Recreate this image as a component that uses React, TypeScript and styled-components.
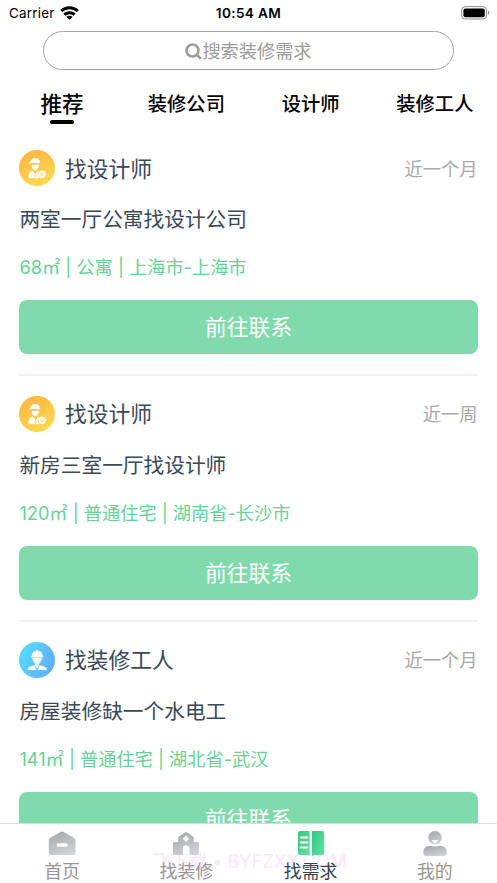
import React from "react";
import styled, { createGlobalStyle } from "styled-components";

const Global = createGlobalStyle`
  * { box-sizing: border-box; }
  html, body { margin: 0; padding: 0; background: #fff; overflow: hidden; }
  body { font-family: Inter, "Noto Sans CJK SC", sans-serif; }
`;

const Screen = styled.div`
  width: 497px;
  height: 883px;
  display: flex;
  flex-direction: column;
  overflow: hidden;
  background: #fff;
`;

const StatusBar = styled.header`
  height: 31px;
  flex: none;
  display: grid;
  grid-template-columns: 1fr auto 1fr;
  padding: 0 7px 6px 9px;
  align-items: center;
  color: #000;
  font-size: 13.5px;
`;

const Carrier = styled.div`
  display: flex;
  align-items: center;
  gap: 5px;
  letter-spacing: 0.2px;
`;

const Clock = styled.div`
  font-weight: 600;
  font-size: 13.6px;
  letter-spacing: 0.35px;
  margin-right: 2px;
`;

const BatterySlot = styled.div`
  display: flex;
  justify-content: flex-end;
`;

const SearchField = styled.div`
  flex: none;
  height: 39px;
  margin: 0 43px;
  border: 1px solid #a2a2a2;
  border-radius: 20px;
  display: flex;
  align-items: center;
  justify-content: center;
  color: #9b9b9b;
  font-size: 18.2px;
  line-height: 36px;
`;

const SearchGlyph = styled.svg`
  margin: 1px 0 0 0;
`;

const Tabs = styled.nav`
  flex: none;
  height: 60px;
  display: grid;
  grid-template-columns: repeat(4, 1fr);
`;

const Tab = styled.div<{ $active?: boolean }>`
  display: flex;
  flex-direction: column;
  align-items: center;
  color: #000;
  font-weight: 500;
  font-size: ${(p) => (p.$active ? "21.6px" : "19.3px")};
  line-height: 30px;
  padding-top: 19px;
`;

const TabMarker = styled.i`
  width: 24px;
  height: 4px;
  border-radius: 2px;
  background: #000;
  margin-top: 1px;
`;

const Feed = styled.main`
  flex: 1;
  min-height: 0;
  overflow: hidden;
  padding: 0 19.4px;
`;

const Card = styled.article`
  height: 245.8px;
  padding-top: 20px;
  display: flex;
  flex-direction: column;
`;

const CardHead = styled.div`
  display: flex;
  align-items: center;
  height: 36px;
`;

const CardKind = styled.span`
  flex: 1;
  margin-left: 9.5px;
  color: #3b4856;
  font-size: 21.8px;
  line-height: 36px;
  padding-top: 1px;
`;

const CardTime = styled.time`
  color: #a8a8a8;
  font-size: 18.3px;
  line-height: 36px;
  padding-top: 1px;
`;

const CardTitle = styled.h2`
  margin: 19.4px 0 0;
  color: #3b4856;
  font-size: 20.7px;
  font-weight: 400;
  line-height: 30px;
`;

const CardMeta = styled.p`
  margin: 18px 0 0;
  color: #68d296;
  font-size: 18.2px;
  line-height: 28px;
  white-space: pre;
`;

const ContactButton = styled.button`
  flex: none;
  margin: 18.6px 0 0;
  height: 54px;
  padding: 0;
  border: 0;
  border-radius: 8px;
  background: #80daab;
  color: #fff;
  font: inherit;
  font-size: 21.8px;
  line-height: 55px;
`;

const Divider = styled.div`
  height: 1.5px;
  flex: none;
  margin-top: 20.5px;
  background: #f1f1f3;
`;

const BottomNav = styled.nav`
  position: relative;
  flex: none;
  height: 60px;
  border-top: 1px solid #d9dcdb;
  background: #fff;
  display: grid;
  grid-template-columns: repeat(4, 1fr);
`;

const NavItem = styled.div<{ $active?: boolean }>`
  display: flex;
  flex-direction: column;
  align-items: center;
  padding-top: 5px;
  color: ${(p) => (p.$active ? "#37414c" : "#969696")};
  font-size: 17.9px;
  line-height: 24px;
`;

const NavIcon = styled.svg`
  display: block;
  position: relative;
  z-index: 1;
  margin-bottom: 3px;
`;

const Watermark = styled.span`
  position: absolute;
  left: 152px;
  top: 22px;
  color: #fbe6fa;
  font-size: 18.3px;
  line-height: 30px;
  white-space: nowrap;
  z-index: 0;
`;

const NavLabel = styled.span`
  position: relative;
  z-index: 1;
`;

function Wifi() {
  return (
    <svg width="19" height="14" viewBox="0 0 19 14" fill="none" stroke="#000" strokeWidth="2.9">
      <path d="M1.200 5C6 .7 13 .7 17.800 5" />
      <path d="M4.300 8.700C7.200 6.100 11.800 6.100 14.700 8.700" />
      <path d="M9.500 13.800 6.400 10.800C8.200 9.400 10.800 9.400 12.600 10.800Z" fill="#000" stroke="none" />
    </svg>
  );
}

function Battery() {
  return (
    <svg width="29" height="14" viewBox="0 0 29 14">
      <rect x=".6" y=".6" width="25" height="12.4" rx="3.6" fill="none" stroke="#8d8d8d" strokeWidth="1" />
      <rect x="2.4" y="2.4" width="21.4" height="8.8" rx="2" fill="#000" />
      <path d="M27.2 4.7c1.5.7 1.5 3.5 0 4.2z" fill="#777" />
    </svg>
  );
}

function DesignerAvatar() {
  return (
    <svg width="36" height="36" viewBox="0 0 36 36">
      <defs>
        <linearGradient id="amber" x1=".2" y1="0" x2=".7" y2="1">
          <stop stopColor="#fdb344" />
          <stop offset="1" stopColor="#ffdb50" />
        </linearGradient>
      </defs>
      <circle cx="18" cy="18" r="18" fill="url(#amber)" />
      <path d="M10.2 13.8c0-1.8 1.6-2.5 2.2-3.8.7-1.4 2.2-2 3.8-2 2.7 0 4.5 1.6 4.6 4.2l-.5 1.2c-3-1-6.8-.9-10.1.4z" fill="#fff" />
      <path d="M12.6 15c2.500-.6 4.700-.7 7.200-.1.2 2.700-1.400 5.200-3.500 5.200s-3.700-2.400-3.700-5.100z" fill="#fff" />
      <path d="M13.4 20.300 16.500 24l2.800-3.600c1 .5 1.800.8 2.400 1.300-2.600 1.700-2.600 4.400-.9 6.500H10.600c-1.200 0-1.300-.8-1.100-2.100.5-3.300 1.600-4.200 3.900-5.800z" fill="#fff" />
      <circle cx="23.100" cy="24.300" r="4.100" fill="#fff" stroke="#fec953" strokeWidth=".8" />
      <path d="M21 22.700c0 1.800.9 2.700 2.100 2.700s2.100-.9 2.100-2.700M23.100 22v4.500" fill="none" stroke="#fed169" strokeWidth=".7" />
      <path d="M15.900 22.900h1.300l.6 3.900-1.200 1.100-1.200-1.100z" fill="#fed678" opacity=".6" />
    </svg>
  );
}

function WorkerAvatar() {
  return (
    <svg width="36" height="36" viewBox="0 0 36 36">
      <defs>
        <linearGradient id="sky" x1="0" y1=".3" x2="1" y2=".7">
          <stop stopColor="#55dafa" />
          <stop offset="1" stopColor="#62adfc" />
        </linearGradient>
        <linearGradient id="face" x1="0" y1="0" x2="0" y2="1">
          <stop stopColor="#fff" stopOpacity=".95" />
          <stop offset="1" stopColor="#fff" stopOpacity=".75" />
        </linearGradient>
      </defs>
      <circle cx="18" cy="18" r="18" fill="url(#sky)" />
      <path d="M12.7 14.200c0-2.700 1.300-4.700 3.600-5.300l.5 3.300V8h2.800v4.200l.6-3.300c2.200.7 3.500 2.600 3.500 5.300l.7.5v.8H12v-.8z" fill="#fff" />
      <path d="M13.400 15.900h9.400c-.2 2.600-1.200 4.500-2.600 5.500v2.800l-2.100 2.600-2.100-2.600v-2.800c-1.400-1-2.400-2.900-2.600-5.500z" fill="url(#face)" />
      <path d="m15.300 23.200 2.100 4.700H8.700c.1-2 1.200-2.800 2.600-3.300zM20.900 23.200l-2.100 4.700h9c-.1-2-1.200-2.800-2.600-3.300z" fill="#fff" />
    </svg>
  );
}

function SilverGradient({ id }: { id: string }) {
  return (
    <defs>
      <linearGradient id={id} x1=".3" y1="0" x2=".7" y2="1">
        <stop stopColor="#a6a8ac" />
        <stop offset="1" stopColor="#d0d3d7" />
      </linearGradient>
    </defs>
  );
}

function HomeIcon() {
  return (
    <NavIcon width="28" height="28" viewBox="0 0 28 28">
      <SilverGradient id="silver-home" />
      <path d="M12.4 2.900q1.600-.9 3.200 0L26 9q1.500.8 1.500 2.500v12.200q0 2.300-2.300 2.300H3.100Q.8 26 .8 23.700V11.500Q.8 9.800 2.300 9z" fill="url(#silver-home)" />
      <rect x="8.600" y="14.200" width="11" height="3.600" rx="1.500" fill="#fff" />
    </NavIcon>
  );
}

function FindShopIcon() {
  return (
    <NavIcon width="28" height="28" viewBox="0 0 28 28">
      <SilverGradient id="silver-shop" />
      <path
        fillRule="evenodd"
        d="M12.900 3.400q1.100-.8 2.200 0l6 4.100q.8.600.8 1.600V13h3.300q1.900 0 1.900 1.900v8.800q0 2.300-2.300 2.300h-7.300v-6.500a3.300 3.300 0 0 0-6.600 0V26H3.200Q.9 26 .9 23.700v-8.800Q.9 13 2.800 13h3.300V9.100q0-1 .8-1.600zM14 6.300l-1.500 2-2 1.500 2 1.500 1.500 2 1.500-2 2-1.500-2-1.500z"
        fill="url(#silver-shop)"
      />
    </NavIcon>
  );
}

function DemandIcon() {
  return (
    <NavIcon width="28" height="28" viewBox="0 0 28 28">
      <defs>
        <linearGradient id="mint" x1="0" y1="0" x2="1" y2="1">
          <stop stopColor="#2dca7d" />
          <stop offset="1" stopColor="#65e0a6" />
        </linearGradient>
      </defs>
      <path d="M3.200 2h9.400v24.700l-1.600-.8H3.200Q1 25.900 1 23.700V4.200Q1 2 3.200 2z" fill="url(#mint)" />
      <path d="M15 2h10q2.200 0 2.200 2.200v19.500q0 2.200-2.200 2.200h-8.300l-1.700.8z" fill="url(#mint)" />
      <path d="M3.800 8.500h6.500M3.800 13.500h6.500M3.800 18.500h6.500" stroke="#fff" strokeWidth="2" strokeLinecap="round" />
    </NavIcon>
  );
}

function ProfileIcon() {
  return (
    <NavIcon width="28" height="28" viewBox="0 0 28 28">
      <SilverGradient id="silver-user" />
      <circle cx="14" cy="8.700" r="6.800" fill="url(#silver-user)" />
      <path d="M11 10.900h6c-.2 4-5.800 4-6 0z" fill="#fff" />
      <path d="M9 16.800q5 1.200 10 0 6.700 0 6.700 6.900 0 3.300-3.200 3.300h-17q-3.200 0-3.200-3.300 0-6.900 6.700-6.900z" fill="url(#silver-user)" />
    </NavIcon>
  );
}

const requests = [
  { kind: "找设计师", time: "近一个月", title: "两室一厅公寓找设计公司", meta: "68㎡ | 公寓 | 上海市-上海市", Avatar: DesignerAvatar },
  { kind: "找设计师", time: "近一周", title: "新房三室一厅找设计师", meta: "120㎡ | 普通住宅 | 湖南省-长沙市", Avatar: DesignerAvatar },
  { kind: "找装修工人", time: "近一个月", title: "房屋装修缺一个水电工", meta: "141㎡ | 普通住宅 | 湖北省-武汉", Avatar: WorkerAvatar },
];

const navItems = [
  { label: "首页", Icon: HomeIcon },
  { label: "找装修", Icon: FindShopIcon },
  { label: "找需求", Icon: DemandIcon, active: true },
  { label: "我的", Icon: ProfileIcon },
];

export default function App() {
  return (
    <Screen>
      <Global />
      <StatusBar>
        <Carrier>
          Carrier <Wifi />
        </Carrier>
        <Clock>10:54 AM</Clock>
        <BatterySlot>
          <Battery />
        </BatterySlot>
      </StatusBar>
      <SearchField>
        <SearchGlyph width="17" height="17" viewBox="0 0 17 17" fill="none" stroke="#9b9b9b" strokeWidth="2.5">
          <circle cx="7.500" cy="7.500" r="6" />
          <path d="m11.700 11.700 4.200 4.200" />
        </SearchGlyph>
        搜索装修需求
      </SearchField>
      <Tabs>
        <Tab $active>
          推荐
          <TabMarker />
        </Tab>
        <Tab>装修公司</Tab>
        <Tab>设计师</Tab>
        <Tab>装修工人</Tab>
      </Tabs>
      <Feed>
        {requests.map(({ kind, time, title, meta, Avatar }) => (
          <Card key={title}>
            <CardHead>
              <Avatar />
              <CardKind>{kind}</CardKind>
              <CardTime>{time}</CardTime>
            </CardHead>
            <CardTitle>{title}</CardTitle>
            <CardMeta>{meta}</CardMeta>
            <ContactButton>前往联系</ContactButton>
            <Divider />
          </Card>
        ))}
      </Feed>
      <BottomNav>
        <Watermark>飞下载 • BYFZXY.COM</Watermark>
        {navItems.map(({ label, Icon, active }) => (
          <NavItem key={label} $active={active}>
            <Icon />
            <NavLabel>{label}</NavLabel>
          </NavItem>
        ))}
      </BottomNav>
    </Screen>
  );
}
